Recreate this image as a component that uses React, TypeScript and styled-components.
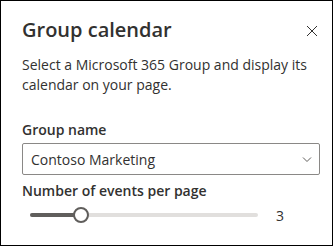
import React from 'react';
import styled, { createGlobalStyle } from 'styled-components';

const GlobalStyle = createGlobalStyle`
    html, body {
        margin: 0;
        padding: 0;
        background: #ffffff;
    }
    body {
        font-family: "Open Sans", "Noto Sans", sans-serif;
        color: #323130;
    }
`;

const SLIDER_MIN = 1;
const SLIDER_MAX = 10;

const App: React.FC = () => {
    const value = 3;
    const percent = ((value - SLIDER_MIN) / (SLIDER_MAX - SLIDER_MIN)) * 100;

    return (
        <>
            <GlobalStyle />
            <Panel>
                <Header>
                    <Title>Group calendar</Title>
                    <CloseButton aria-label="Close">
                        <svg width="12" height="12" viewBox="0 0 12 12">
                            <path d="M1 1 L11 11 M11 1 L1 11" stroke="#323130" strokeWidth="1" fill="none" />
                        </svg>
                    </CloseButton>
                </Header>
                <Description>
                    Select a Microsoft 365 Group and display its calendar on your page.
                </Description>
                <Field>
                    <Label>Group name</Label>
                    <Dropdown>
                        <DropdownText>Contoso Marketing</DropdownText>
                        <svg width="12" height="12" viewBox="0 0 12 12">
                            <path d="M2 4.5 L6 8.5 L10 4.5" stroke="#605e5c" strokeWidth="1" fill="none" />
                        </svg>
                    </Dropdown>
                </Field>
                <Field>
                    <SliderLabel>Number of events per page</SliderLabel>
                    <SliderRow>
                        <Track>
                            <ActiveTrack style={{ width: `${percent}%` }} />
                            <Thumb style={{ left: `${percent}%` }} />
                        </Track>
                        <SliderValue>{value}</SliderValue>
                    </SliderRow>
                </Field>
            </Panel>
        </>
    );
};

const Panel = styled.div`
    box-sizing: border-box;
    width: 333px;
    height: 246px;
    border: 1px solid #000000;
    padding: 14px 12px 0 21px;
    display: flex;
    flex-direction: column;
`;

const Header = styled.div`
    display: flex;
    align-items: center;
    justify-content: space-between;
`;

const Title = styled.h1`
    margin: 0;
    font-size: 20px;
    font-weight: 600;
    line-height: 30px;
    color: #323130;
`;

const CloseButton = styled.button`
    display: flex;
    align-items: center;
    justify-content: center;
    width: 24px;
    height: 24px;
    padding: 0;
    border: none;
    background: transparent;
    margin-right: -4px;
    margin-top: 2px;
`;

const Description = styled.p`
    margin: 10px 8px 0 0;
    font-size: 14px;
    line-height: 20px;
    color: #323130;
`;

const Field = styled.div`
    display: flex;
    flex-direction: column;
`;

const Label = styled.div`
    margin-top: 25px;
    font-size: 14px;
    font-weight: 600;
    line-height: 20px;
    padding-bottom: 3px;
`;

const SliderLabel = styled(Label)`
    margin-top: 6px;
    padding-bottom: 0;
`;

const Dropdown = styled.div`
    box-sizing: border-box;
    height: 32px;
    border: 1px solid #8a8886;
    border-radius: 2px;
    display: flex;
    align-items: center;
    justify-content: space-between;
    padding: 0 6px 0 8px;
`;

const DropdownText = styled.span`
    font-size: 14px;
    color: #323130;
`;

const SliderRow = styled.div`
    display: flex;
    align-items: center;
    height: 28px;
    padding-left: 8px;
`;

const Track = styled.div`
    position: relative;
    flex: 0 0 228px;
    height: 4px;
    border-radius: 4px;
    background: #e1dfdd;
`;

const ActiveTrack = styled.div`
    height: 100%;
    border-radius: 4px;
    background: #605e5c;
`;

const Thumb = styled.div`
    position: absolute;
    top: 50%;
    box-sizing: border-box;
    width: 16px;
    height: 16px;
    border: 2px solid #605e5c;
    border-radius: 50%;
    background: #ffffff;
    transform: translate(-50%, -50%);
`;

const SliderValue = styled.span`
    margin-left: 18px;
    font-size: 14px;
    color: #323130;
`;

export default App;
